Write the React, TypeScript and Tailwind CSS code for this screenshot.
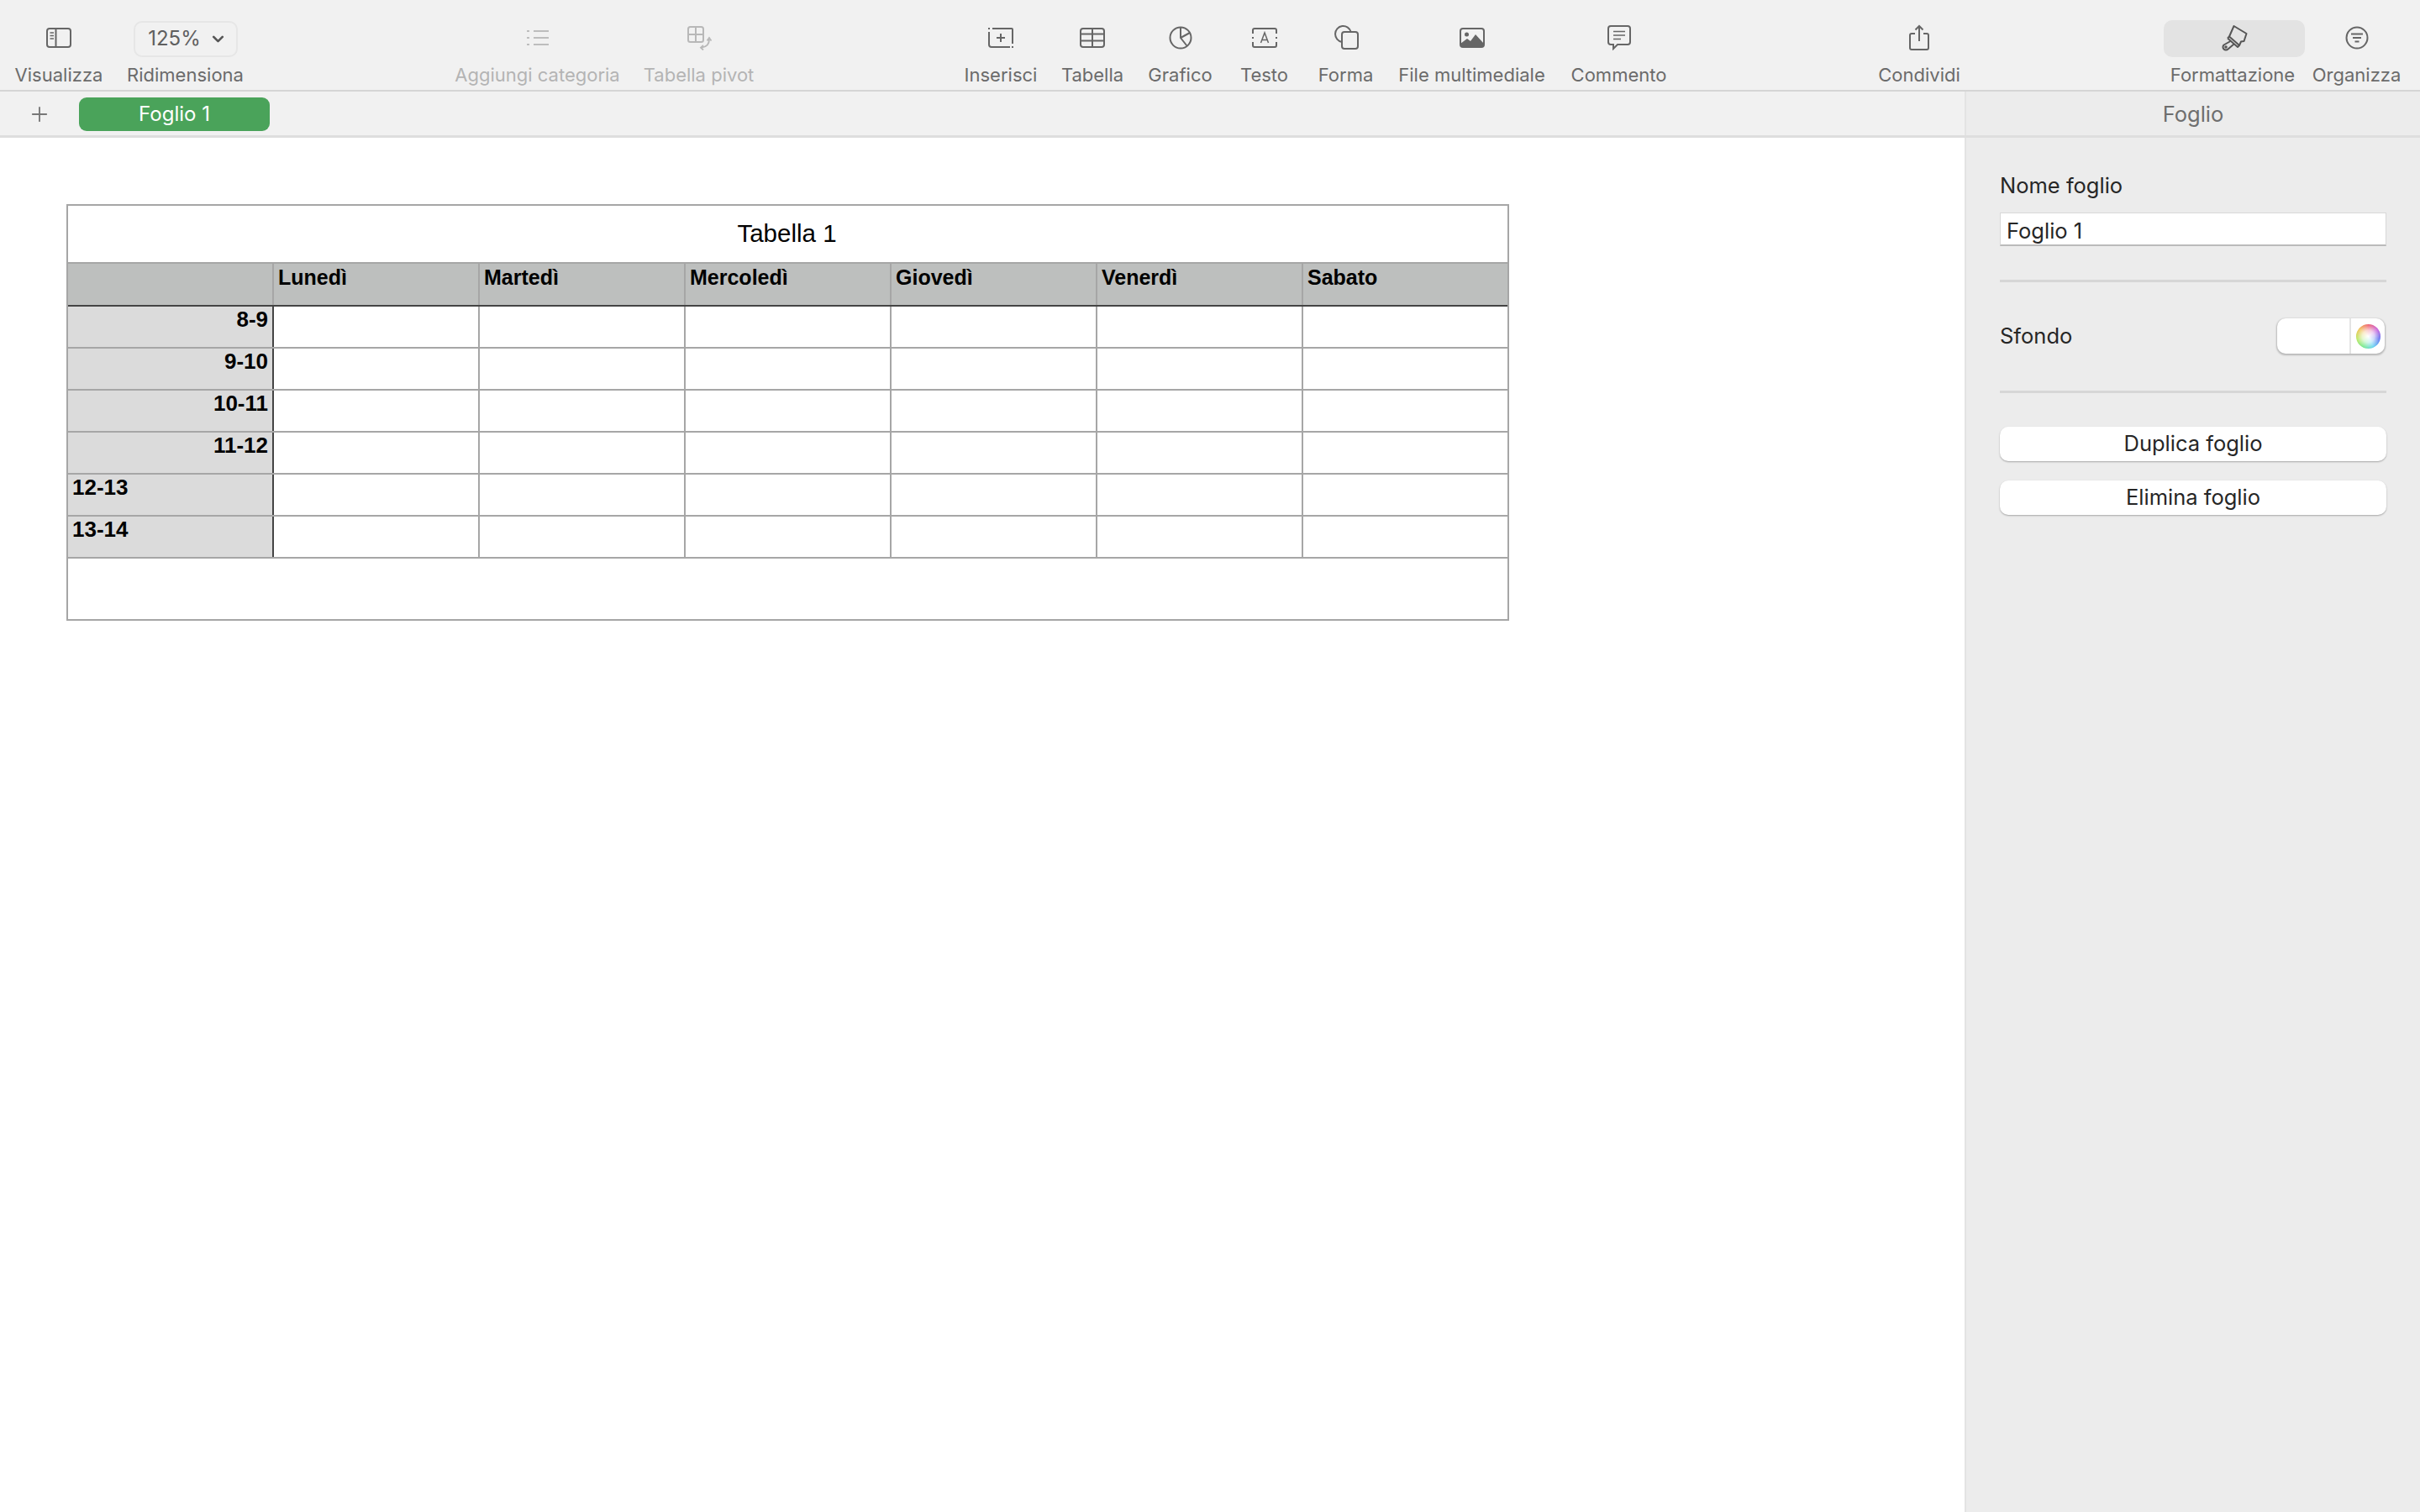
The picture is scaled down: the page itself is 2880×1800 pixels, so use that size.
import { Plus, ChevronDown } from 'lucide-react';

const days = ['Lunedì', 'Martedì', 'Mercoledì', 'Giovedì', 'Venerdì', 'Sabato'];

const rows = [
  { label: '8-9', right: true },
  { label: '9-10', right: true },
  { label: '10-11', right: true },
  { label: '11-12', right: true },
  { label: '12-13', right: false },
  { label: '13-14', right: false },
];

function ViewIcon() {
  return (
    <svg width="32" height="26" viewBox="0 0 32 26" fill="none" stroke="#666" strokeWidth="2">
      <rect x="2" y="2" width="28" height="22" rx="3" />
      <path d="M12.500 2v22" />
      <path d="M5.500 7h4.500M5.500 10.500h4.500M5.500 14h4.500" strokeWidth="1.600" />
    </svg>
  );
}

function ListIcon() {
  return (
    <svg width="28" height="22" viewBox="0 0 28 22" fill="none" stroke="#bdbdbd" strokeWidth="2">
      <path d="M9 3h18M9 11h18M9 19h18" />
      <path d="M1 3h3M1 11h3M1 19h3" />
    </svg>
  );
}

function PivotIcon() {
  return (
    <svg width="30" height="30" viewBox="0 0 30 30" fill="none" stroke="#b8b8b8" strokeWidth="2">
      <rect x="2" y="2" width="18" height="18" rx="2.500" />
      <path d="M11 2v18M2 11h18" />
      <path d="M27 17c0 6-4 9-9 9.500" strokeWidth="1.800" />
      <path d="M24.500 18.500L27 15l2.500 3.500M20 24l-3 2.700 3 2.800" strokeWidth="1.800" />
    </svg>
  );
}

function InsertIcon() {
  return (
    <svg width="32" height="26" viewBox="0 0 32 26" fill="none" stroke="#666" strokeWidth="2">
      <path d="M2 6v15a3 3 0 0 0 3 3h22" />
      <path d="M6 2h23a1 1 0 0 1 1 1v17" />
      <path d="M2 1v2M30 23v2" />
      <path d="M16 8v10M11 13h10" />
    </svg>
  );
}

function TableIcon() {
  return (
    <svg width="32" height="26" viewBox="0 0 32 26" fill="none" stroke="#666" strokeWidth="2">
      <rect x="2" y="2" width="28" height="22" rx="3" />
      <path d="M2 8.500h28M2 16.500h28M16 2v22" />
    </svg>
  );
}

function ChartIcon() {
  return (
    <svg width="30" height="30" viewBox="0 0 30 30" fill="none" stroke="#666" strokeWidth="2">
      <circle cx="15" cy="15" r="12.500" />
      <path d="M15 2.500V15l7.500 9.500" />
      <path d="M15 15l11-6" />
    </svg>
  );
}

function TextIcon() {
  return (
    <svg width="32" height="26" viewBox="0 0 32 26" fill="none" stroke="#666" strokeWidth="2">
      <path d="M2 8V4a2 2 0 0 1 2-2h24a2 2 0 0 1 2 2v4M2 18v4a2 2 0 0 0 2 2h24a2 2 0 0 0 2-2v-4" />
      <path d="M2 12v2M30 12v2" />
      <path d="M11.500 19l4.500-12 4.500 12M13 15.500h6" strokeWidth="1.500" />
    </svg>
  );
}

function ShapeIcon() {
  return (
    <svg width="30" height="30" viewBox="0 0 30 30" fill="none" stroke="#666" strokeWidth="2">
      <path d="M20.700 8A9.500 9.500 0 1 0 10 19.900" />
      <rect x="10" y="8" width="19" height="20" rx="3" />
    </svg>
  );
}

function MediaIcon() {
  return (
    <svg width="32" height="26" viewBox="0 0 32 26" fill="none">
      <rect x="2" y="2" width="28" height="22" rx="3" stroke="#666" strokeWidth="2" />
      <circle cx="9.500" cy="9" r="2.500" fill="#666" />
      <path d="M2 20l8-6 4 3 6-8 10 11v2a2 2 0 0 1-2 2H4a2 2 0 0 1-2-2z" fill="#666" />
    </svg>
  );
}

function CommentIcon() {
  return (
    <svg width="30" height="30" viewBox="0 0 30 30" fill="none" stroke="#666" strokeWidth="2">
      <path d="M5 1h20a3 3 0 0 1 3 3v16a3 3 0 0 1-3 3H13l-5 5v-5H5a3 3 0 0 1-3-3V4a3 3 0 0 1 3-3z" />
      <path d="M8 7.500h14M8 12h14M8 16.500h9" strokeWidth="1.600" />
    </svg>
  );
}

function ShareIcon() {
  return (
    <svg width="26" height="32" viewBox="0 0 26 32" fill="none" stroke="#666" strokeWidth="2">
      <path d="M8 11H4a2 2 0 0 0-2 2v15a2 2 0 0 0 2 2h18a2 2 0 0 0 2-2V13a2 2 0 0 0-2-2h-4" />
      <path d="M13 20V2M8.500 6.500L13 2l4.500 4.500" />
    </svg>
  );
}

function BrushIcon() {
  return (
    <svg width="32" height="32" viewBox="0 0 32 32" fill="none" stroke="#555" strokeWidth="2" strokeLinejoin="round">
      <path d="M15.500 2L30.500 11l-3 9-3.500.5L22 25 10 14.500z" />
      <path d="M8 16.500L20 27l2-2" />
      <path d="M8 16.500l2-2" />
      <path d="M11.500 20L3.500 24.500a3.500 3.500 0 1 0 5 5L15.500 23.500" />
      <circle cx="6" cy="27" r="0.800" fill="#555" />
    </svg>
  );
}

function ArrangeIcon() {
  return (
    <svg width="30" height="30" viewBox="0 0 30 30" fill="none" stroke="#666" strokeWidth="2">
      <circle cx="15" cy="15" r="12.500" />
      <path d="M8 10.500h14M10 15h10M12.500 19.500h5" />
    </svg>
  );
}

function ToolItem({ label, width, disabled, pill, labelClass, children }: { label: string; width: string; disabled?: boolean; pill?: boolean; labelClass?: string; children: React.ReactNode }) {
  return (
    <div className={`flex flex-col items-center shrink-0 ${width}`}>
      <div className={`h-[44px] w-full flex items-center justify-center ${pill ? '' : 'pb-[2px]'}`}>{children}</div>
      <span className={`mt-[7px] text-[22px] leading-[28px] whitespace-nowrap ${disabled ? 'text-[#b4b4b4]' : 'text-[#6b6b6b]'} ${labelClass ?? ''}`}>
        {label}
      </span>
    </div>
  );
}

function Toolbar() {
  return (
    <div className="h-[109px] shrink-0 flex pt-[24px] bg-[#f1f1f1] border-b-2 border-[#d5d5d5]">
      <div className="ml-[18px] w-[104px] shrink-0">
        <ToolItem label="Visualizza" width="w-[104px]"><ViewIcon /></ToolItem>
      </div>
      <div className="ml-[29px] shrink-0">
        <ToolItem label="Ridimensiona" width="w-[139px]" pill>
          <div className="w-[124px] h-[43px] rounded-[10px] border-2 border-[#e6e6e6] flex items-center justify-center gap-[10px] pl-[5px] text-[24px] text-[#5f5f5f]">
            125%
            <ChevronDown size={21} strokeWidth={3} color="#555" />
          </div>
        </ToolItem>
      </div>
      <div className="ml-[252px] flex gap-[29px] shrink-0">
        <ToolItem label="Aggiungi categoria" width="w-[195px]" disabled><ListIcon /></ToolItem>
        <ToolItem label="Tabella pivot" width="w-[131px]" disabled><PivotIcon /></ToolItem>
      </div>
      <div className="ml-[251px] flex shrink-0">
        <ToolItem label="Inserisci" width="w-[86px]"><InsertIcon /></ToolItem>
        <div className="ml-[29px]"><ToolItem label="Tabella" width="w-[74px]"><TableIcon /></ToolItem></div>
        <div className="ml-[30px]"><ToolItem label="Grafico" width="w-[75px]"><ChartIcon /></ToolItem></div>
        <div className="ml-[34px]"><ToolItem label="Testo" width="w-[57px]"><TextIcon /></ToolItem></div>
        <div className="ml-[36px]"><ToolItem label="Forma" width="w-[65px]"><ShapeIcon /></ToolItem></div>
        <div className="ml-[30px]"><ToolItem label="File multimediale" width="w-[175px]"><MediaIcon /></ToolItem></div>
        <div className="ml-[31px]"><ToolItem label="Commento" width="w-[113px]"><CommentIcon /></ToolItem></div>
      </div>
      <div className="ml-[253px] shrink-0">
        <ToolItem label="Condividi" width="w-[96px]"><ShareIcon /></ToolItem>
      </div>
      <div className="ml-[243px] shrink-0">
        <ToolItem label="Formattazione" width="w-[168px]" pill labelClass="mr-[4px]">
          <div className="w-[168px] h-[44px] rounded-[10px] bg-[#e3e3e3] flex items-center justify-center pb-[2px]"><BrushIcon /></div>
        </ToolItem>
      </div>
      <div className="ml-[9px] shrink-0">
        <ToolItem label="Organizza" width="w-[105px]"><ArrangeIcon /></ToolItem>
      </div>
    </div>
  );
}

function SheetTable() {
  return (
    <div className="w-[1717px] border-2 border-[#a6a6a6] bg-white font-['Liberation_Sans',Arial,sans-serif] text-black">
      <div className="h-[69px] flex items-center justify-center pr-[2px] text-[29.500px] border-b-2 border-[#a6a6a6]">Tabella 1</div>

      {/* header */}
      <div className="grid grid-cols-[repeat(6,245px)_243px] h-[51px] bg-[#bdbfbe] border-b-2 border-[#444]">
        <div className="border-r-2 border-[#a6a6a6]" />
        {days.map((d, i) => (
          <div key={d} className={`pl-[5px] pt-[2px] text-[25px] leading-[28px] font-bold ${i < 5 ? 'border-r-2 border-[#a6a6a6]' : ''}`}>
            {d}
          </div>
        ))}
      </div>

      {rows.map((r) => (
        <div key={r.label} className="grid grid-cols-[repeat(6,245px)_243px] h-[50px] border-b-2 border-[#a6a6a6]">
          <div className={`bg-[#dbdbdb] border-r-2 border-[#444] px-[5px] pt-[1px] text-[26px] leading-[28px] font-bold ${r.right ? 'text-right' : 'text-left'}`}>
            {r.label}
          </div>
          {days.map((d, i) => (
            <div key={d} className={i < 5 ? 'border-r-2 border-[#a6a6a6]' : ''} />
          ))}
        </div>
      ))}

      <div className="h-[72px]" />
    </div>
  );
}

function Inspector() {
  return (
    <div className="w-[542px] shrink-0 bg-[#ececec] border-l-2 border-[#e3e3e3] px-[40px] text-[#262626] text-[25.500px]">
      <div className="pt-[41px] leading-[32px]">Nome foglio</div>
      <div className="mt-[16px] h-[40px] bg-white border border-[#d8d8d8] border-b-2 border-b-[#bbb] pl-[7px] leading-[41px]">Foglio 1</div>
      <div className="mt-[40px] h-[3px] bg-[#d6d6d6]" />

      <div className="mt-[43px] flex items-center justify-between h-[42px]">
        <span className="pt-[1px]">Sfondo</span>
        <div className="mr-[2px] w-[128px] h-[42px] flex rounded-[10px] bg-white overflow-hidden shadow-[0_1px_2px_1px_rgba(0,0,0,0.22)]">
          <div className="flex-1 border-r-2 border-[#e4e4e4]" />
          <div className="w-[40px] flex items-center justify-center">
            <div className="w-[29px] h-[29px] rounded-full bg-[conic-gradient(from_0deg,#ee5a6a,#c65ad8,#5a6cf0,#5fd0f0,#6fe88a,#b8e65a,#f0c04c,#ee5a6a)]">
              <div className="w-full h-full rounded-full bg-[radial-gradient(circle,#ffffff_0%,rgba(255,255,255,0.7)_35%,rgba(255,255,255,0)_72%)]" />
            </div>
          </div>
        </div>
      </div>

      <div className="mt-[44px] h-[3px] bg-[#d6d6d6]" />

      <div className="mt-[40px] h-[41px] rounded-[10px] bg-white flex items-center justify-center shadow-[0_1px_2px_rgba(0,0,0,0.3)]">Duplica foglio</div>
      <div className="mt-[23px] h-[41px] rounded-[10px] bg-white flex items-center justify-center shadow-[0_1px_2px_rgba(0,0,0,0.3)]">Elimina foglio</div>
    </div>
  );
}

export default function App() {
  return (
    <div className="w-[2880px] h-[1800px] flex flex-col overflow-hidden bg-white font-['Inter','Noto_Sans',sans-serif]">
      <Toolbar />

      {/* sheet tabs */}
      <div className="h-[55px] shrink-0 flex bg-[#f1f1f1] border-b-[3px] border-[#dedede]">
        <div className="flex-1 flex items-start pt-[7px]">
          <div className="w-[94px] h-[40px] flex items-center justify-center">
            <Plus size={28} strokeWidth={1.6} color="#777" />
          </div>
          <div className="w-[227px] h-[40px] rounded-[9px] bg-[#4aa35a] text-white text-[24px] flex items-center justify-center">
            Foglio 1
          </div>
        </div>
        <div className="w-[542px] shrink-0 bg-[#ececec] border-l-2 border-[#e3e3e3] flex items-center justify-center pt-[2px] text-[25.500px] text-[#6e6e6e]">
          Foglio
        </div>
      </div>

      <div className="flex-1 flex min-h-0">
        <div className="flex-1 pl-[79px] pt-[79px]">
          <SheetTable />
        </div>
        <Inspector />
      </div>
    </div>
  );
}
